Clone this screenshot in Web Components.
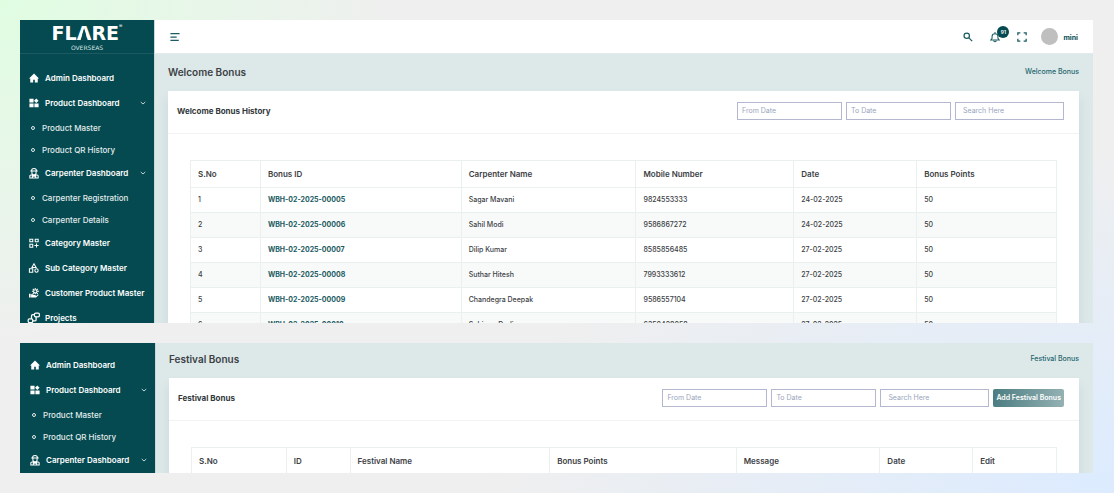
<!DOCTYPE html>
<html lang="en">
<head>
<meta charset="utf-8">
<meta name="viewport" content="width=device-width, initial-scale=1">
<title>Flare Overseas</title>
<style>
   * { box-sizing: border-box; }
   body {
      margin: 0;
      height: 100vh;
      padding: 20px 21px 20px 20px;
      display: grid;
      grid-template-columns: minmax( 0, 1fr );
      grid-template-rows: minmax( 0, 7fr ) minmax( 0, 3fr );
      gap: 20px;
      background:
         radial-gradient( ellipse 36% 70% at 0 0, #e0fde2, #e0fde200 ),
         radial-gradient( ellipse 56% 70% at 100% 100%, #dcebff, #dcebff00 ),
         #efefef;
      color: #3c4145;
      font: 400 7px/10px Inter, "Liberation Sans", sans-serif;
      --deep: #044a50;
   }
</style>
</head>
<body>

<app-panel>
   <side-nav slot="side" brand></side-nav>
   <top-bar slot="top"></top-bar>
   <page-head title-text="Welcome Bonus"></page-head>
   <bonus-card heading="Welcome Bonus History">
      <data-table set="welcome"></data-table>
   </bonus-card>
</app-panel>

<app-panel plain>
   <side-nav slot="side"></side-nav>
   <page-head title-text="Festival Bonus"></page-head>
   <bonus-card heading="Festival Bonus">
      <add-button slot="action">Add Festival Bonus</add-button>
      <data-table set="festival"></data-table>
   </bonus-card>
</app-panel>

<script>
const
   base = `* { box-sizing: border-box; } a { color: inherit; text-decoration: none; } button, input { font: inherit; margin: 0; }`,

   Icons = {
      home: `<path fill="currentColor" d="M12 1 0 13h3v10h7v-7h4v7h7V13h3z"/>`,
      widgets: `<path fill="currentColor" d="M1 2h10v9H1zM1 13h10v9H1zM13 13h10v9H13zM17.500 1 23 6.500 17.500 12 12 6.500z"/>`,
      worker: `<g fill="none" stroke="currentColor" stroke-width="2.500"><path d="M3 7h18M6 7c0-8 12-8 12 0M7 8v4c0 6 10 6 10 0V8M2 24v-5c0-2 2-3 6-3l4 3 4-3c4 0 6 1 6 3v5zM8 16v8M16 16v8M8 20h8"/></g>`,
      category: `<g fill="none" stroke="currentColor" stroke-width="2.500"><path d="M2 3h7v6H2zM15 3h7v6h-7zM2 15h7v7H2zM18 13v10M13 18h10"/></g>`,
      shapes: `<g fill="none" stroke="currentColor" stroke-width="2.500"><path d="M12 2 7 11h10zM1 14h8v8H1z"/><circle cx="18" cy="18" r="4"/></g>`,
      hand: `<g fill="none" stroke="currentColor" stroke-width="2.500"><circle cx="15" cy="8" r="4"/><path d="M15 0v3M15 12v3M7 8h3M19 8h5M9 2l3 3M21 2l-3 3M9 14l3-3M21 14l-3-3"/></g><path fill="currentColor" d="M0 14h4v9H0zM5 15h4l3 2h4v2h-5 6l5-4 1 2-6 6H5z"/>`,
      projects: `<g fill="none" stroke="currentColor" stroke-width="3"><rect x="13" y="0" width="12" height="9" rx="3"/><rect x="-2" y="14" width="11" height="9" rx="3"/><path d="M13 4H9c-2 0-3 1-3 3v7M9 19h5c2 0 3-1 3-3V9"/></g>`,
      chevron: `<path fill="none" stroke="currentColor" stroke-width="3" d="m3 8 9 8 9-8"/>`,
      menu: `<path fill="none" stroke="currentColor" stroke-width="3" d="M1 4h22M1 12h15M1 20h20"/>`,
      search: `<g fill="none" stroke="currentColor" stroke-width="3"><circle cx="9" cy="9" r="6.500"/><path d="m14 14 8 8"/></g>`,
      bell: `<path fill="none" stroke="currentColor" stroke-width="2.500" d="M12 0v4M2 19h20l-3-4V10c0-8-14-8-14 0v5zM9 21c0 3 6 3 6 0"/>`,
      full: `<path fill="none" stroke="currentColor" stroke-width="3" d="M2 8V2h6M16 2h6v6M22 16v6h-6M8 22H2v-6"/>`
   },

   Menu = [
      { text: "Admin Dashboard", icon: "home" },
      { text: "Product Dashboard", icon: "widgets", sub: [ "Product Master", "Product QR History" ] },
      { text: "Carpenter Dashboard", icon: "worker", sub: [ "Carpenter Registration", "Carpenter Details" ] },
      { text: "Category Master", icon: "category" },
      { text: "Sub Category Master", icon: "shapes" },
      { text: "Customer Product Master", icon: "hand" },
      { text: "Projects", icon: "projects" }
   ],

   // each head entry: [ label, relative width ]
   Sets = {
      welcome: {
         head: [ [ "S.No", 70 ], [ "Bonus ID", 201 ], [ "Carpenter Name", 175 ], [ "Mobile Number", 158 ], [ "Date", 123 ], [ "Bonus Points", 140 ] ],
         rows: [
            [ "1", "WBH-02-2025-00005", "Sagar Mavani", "9824553333", "24-02-2025", "50" ],
            [ "2", "WBH-02-2025-00006", "Sahil Modi", "9586867272", "24-02-2025", "50" ],
            [ "3", "WBH-02-2025-00007", "Dilip Kumar", "8585856485", "27-02-2025", "50" ],
            [ "4", "WBH-02-2025-00008", "Suthar Hitesh", "7993333612", "27-02-2025", "50" ],
            [ "5", "WBH-02-2025-00009", "Chandegra Deepak", "9586557104", "27-02-2025", "50" ],
            [ "6", "WBH-02-2025-00010", "Sohiram Dudi", "6350428058", "27-02-2025", "50" ]
         ]
      },
      festival: {
         head: [ [ "S.No", 95 ], [ "ID", 64 ], [ "Festival Name", 200 ], [ "Bonus Points", 187 ], [ "Message", 144 ], [ "Date", 93 ], [ "Edit", 84 ] ],
         rows: []
      }
   }
;

const define = ( name, view ) => customElements.define( name, class extends HTMLElement {
   constructor() {
      super();
      this.attachShadow( { mode: "open" } );
   }
   connectedCallback() {
      this.shadowRoot.innerHTML = `<style>${ base }</style>` + view( this );
   }
} );

define( "app-icon", el => `
   <style>
      :host { display: block; flex: none; width: var( --size, 10px ); height: var( --size, 10px ); }
      svg { display: block; width: 100%; height: 100%; overflow: visible; }
   </style>
   <svg viewBox="0 0 24 24" aria-hidden="true">${ Icons[ el.getAttribute( "name" ) ] }</svg>
` );

define( "app-panel", () => `
   <style>
      :host {
         --side: 134px;
         --lift: 0px;
         display: grid;
         grid-template-columns: var( --side ) minmax( 0, 1fr );
         overflow: hidden;
         background: #dde8e9;
      }
      :host( [plain] ) { --side: 135px; --lift: 2px; }
      main { min-width: 0; border-left: 1px solid #c9d8da; }
      section { padding: calc( 8px - var( --lift ) ) 14px 0 13px; }
   </style>
   <slot name="side"></slot>
   <main>
      <slot name="top"></slot>
      <section><slot></slot></section>
   </main>
` );

/* == [ sidebar ] == == == == == == == == == */
define( "brand-logo", () => `
   <style>
      :host {
         display: grid;
         justify-items: center;
         align-content: start;
         height: 34px;
         padding-top: 2px;
         border-bottom: 1px solid #1a5a60;
         color: #fff;
      }
      strong { display: flex; font: 700 19px/22px "DejaVu Sans", sans-serif; }
      sup { font: 400 5px/8px Inter, sans-serif; }
      small { font: 400 6px/7px "DejaVu Sans", sans-serif; color: #d5e1e2; }
      .a { position: relative; }
      /* hides the crossbar of the A */
      .a::after {
         content: "";
         position: absolute;
         left: 4px; right: 4px;
         top: 6px; bottom: 4px;
         background: var( --deep );
         clip-path: polygon( 50% 0, 100% 100%, 0 100% );
      }
   </style>
   <strong><span>FL</span><span class="a">A</span><span>RE</span><sup>®</sup></strong>
   <small>OVERSEAS</small>
` );

define( "nav-item", el => {
   const
      sub = el.hasAttribute( "sub" ),
      open = el.hasAttribute( "group" ),
      tag = open ? `button type="button" aria-expanded="true"` : `a href="#"`
   ;
   return `
   <style>
      :host { display: block; }
      a, button {
         display: flex;
         align-items: center;
         width: 100%;
         height: 25px;
         padding: 0;
         gap: 6px;
         border: 0;
         background: none;
         color: #fff;
         text-align: left;
         white-space: nowrap;
         font: 600 8px/12px Inter, "Liberation Sans", sans-serif;
      }
      .sub { height: 22px; gap: 7px; padding-left: 2px; font-weight: 500; color: #e2ebec; }
      i { width: 4px; height: 4px; border: 1px solid currentColor; border-radius: 50%; }
      .text { flex: 1; }
      .arrow { --size: 6px; margin-right: 8px; }
   </style>
   <${ tag } class="${ sub ? "sub" : "" }">
      ${ sub ? "<i></i>" : `<app-icon name="${ el.getAttribute( "icon" ) }"></app-icon>` }
      <span class="text"><slot></slot></span>
      ${ open ? `<app-icon class="arrow" name="chevron"></app-icon>` : "" }
   </${ open ? "button" : "a" }>`;
} );

define( "side-nav", el => `
   <style>
      :host { display: block; min-width: 0; overflow: hidden; background: var( --deep ); }
      nav { padding: calc( 11px - var( --lift ) ) 0 0 calc( var( --side ) - 125px ); }
      .group { height: 45px; padding-top: 2px; }
   </style>
   ${ el.hasAttribute( "brand" ) ? "<brand-logo></brand-logo>" : "" }
   <nav>
      ${ Menu.map( m => `
         <nav-item icon="${ m.icon }" ${ m.sub ? "group" : "" }>${ m.text }</nav-item>
         ${ m.sub ? `<div class="group">${ m.sub.map( s => `<nav-item sub>${ s }</nav-item>` ).join( "" ) }</div>` : "" }
      ` ).join( "" ) }
   </nav>
` );

/* == [ top bar ] == == == == == == == == == */
define( "top-bar", () => `
   <style>
      :host {
         display: flex;
         align-items: center;
         height: 34px;
         padding: 0 15px;
         background: #fff;
         border-bottom: 1px solid #e3ecec;
         color: #1b5b62;
      }
      button { position: relative; display: block; padding: 0; border: 0; background: none; color: inherit; }
      .tools { display: flex; flex: 1; align-items: center; justify-content: flex-end; gap: 17px; }
      .badge {
         position: absolute;
         left: 7px; top: -6px;
         width: 12px; height: 12px;
         border-radius: 50%;
         background: var( --deep );
         color: #fff;
         font: 600 5px/12px Inter, sans-serif;
         text-align: center;
      }
      .user { display: flex; align-items: center; gap: 5px; margin-left: 14px; font-weight: 700; color: var( --deep ); }
      .user i { width: 17px; height: 17px; border-radius: 50%; background: #bfbfbf; }
      .user span { padding-top: 3px; }
   </style>
   <button aria-label="Menu"><app-icon name="menu"></app-icon></button>
   <div class="tools">
      <button aria-label="Search"><app-icon name="search"></app-icon></button>
      <button aria-label="Notifications"><app-icon name="bell"></app-icon><span class="badge">91</span></button>
      <button aria-label="Full screen"><app-icon name="full"></app-icon></button>
   </div>
   <a class="user" href="#"><i></i><span>mini</span></a>
` );

/* == [ content ] == == == == == == == == == */
define( "page-head", el => `
   <style>
      :host { display: flex; align-items: center; justify-content: space-between; height: 20px; }
      h1 { margin: 0; font: 600 10px/14px Inter, sans-serif; }
      a { color: #23666d; font-weight: 500; }
   </style>
   <h1>${ el.getAttribute( "title-text" ) }</h1>
   <a href="#">${ el.getAttribute( "title-text" ) }</a>
` );

define( "bonus-card", el => `
   <style>
      :host {
         display: block;
         margin-top: 9px;
         background: #fff;
         box-shadow: 0 8px 12px #044a5018;
      }
      header {
         display: flex;
         align-items: center;
         gap: 4px;
         height: 43px;
         padding: 0 15px 3px 9px;
         border-bottom: 1px solid #f2f4f4;
      }
      h2 { flex: 1; margin: 0; font: 700 8px/12px Inter, sans-serif; color: #33383b; }
      input {
         width: 105px;
         height: 18px;
         padding: 0 4px;
         border: 1px solid #b3b7cf;
         border-radius: 0;
         background: #fff;
         color: inherit;
      }
      .find { width: 109px; padding: 0 7px; }
      input::placeholder { color: #99a5bd; opacity: 1; }
      .body { padding: 26px 22px 22px; }
   </style>
   <header>
      <h2>${ el.getAttribute( "heading" ) }</h2>
      <input type="text" aria-label="From Date" placeholder="From Date">
      <input type="text" aria-label="To Date" placeholder="To Date">
      <input class="find" type="text" aria-label="Search Here" placeholder="Search Here">
      <slot name="action"></slot>
   </header>
   <div class="body"><slot></slot></div>
` );

define( "add-button", () => `
   <style>
      :host { display: block; }
      button {
         display: block;
         height: 18px;
         padding: 0 3px;
         border: 0;
         border-radius: 2px;
         background: linear-gradient( 90deg, #4b7d82, #94b1b3 );
         color: #fff;
         font-weight: 600;
         white-space: nowrap;
      }
   </style>
   <button type="button"><slot></slot></button>
` );

define( "data-table", el => {
   const
      { head, rows } = Sets[ el.getAttribute( "set" ) ],
      total = head.reduce( ( sum, h ) => sum + h[ 1 ], 0 )
   ;
   return `
   <style>
      :host { display: block; }
      table { width: 100%; table-layout: fixed; border-collapse: collapse; }
      th, td { height: 25px; padding: 0 7px; border: 1px solid #eaf0f0; text-align: left; }
      th { height: 27px; font: 600 8px/12px Inter, sans-serif; }
      td { font-weight: 500; }
      tbody tr:nth-child( even ) { background: #f8faf9; }
      td a { font-weight: 700; color: #1b5b62; }
   </style>
   <table>
      <colgroup>${ head.map( h => `<col style="width: ${ h[ 1 ] / total * 100 }%">` ).join( "" ) }</colgroup>
      <thead><tr>${ head.map( h => `<th scope="col">${ h[ 0 ] }</th>` ).join( "" ) }</tr></thead>
      <tbody>${ rows.map( r => `<tr>${ r.map( ( v, i ) => `<td>${ i == 1 ? `<a href="#">${ v }</a>` : v }</td>` ).join( "" ) }</tr>` ).join( "" ) }</tbody>
   </table>`;
} );
</script>
</body>
</html>
